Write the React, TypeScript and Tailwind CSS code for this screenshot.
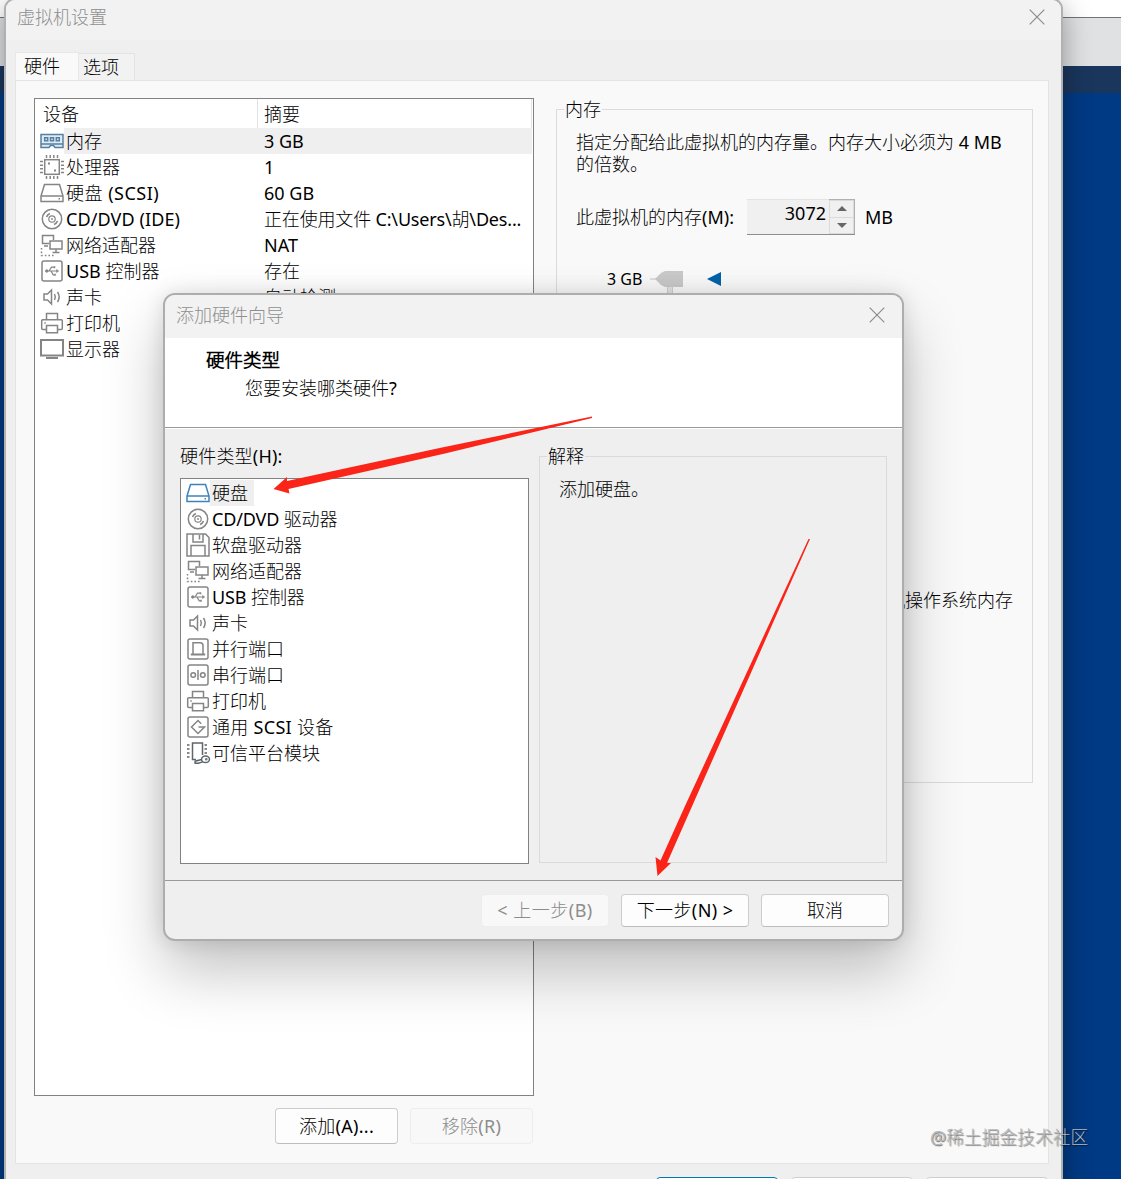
import { clsx } from 'clsx';
import type { ReactNode } from 'react';

type IconName =
  | 'memory'
  | 'cpu'
  | 'disk'
  | 'disc'
  | 'network'
  | 'usb'
  | 'sound'
  | 'printer'
  | 'display'
  | 'floppy'
  | 'parallel'
  | 'serial'
  | 'scsi'
  | 'tpm';

const devices: { icon: IconName; name: string; summary?: string; nameClass?: string; summaryClass?: string }[] = [
  { icon: 'memory', name: '内存', summary: '3 GB' },
  { icon: 'cpu', name: '处理器', summary: '1' },
  { icon: 'disk', name: '硬盘 (SCSI)', summary: '60 GB', nameClass: 'tracking-[0.5px]' },
  {
    icon: 'disc',
    name: 'CD/DVD (IDE)',
    summary: '正在使用文件 C:\\Users\\胡\\Des...',
    nameClass: 'tracking-[0.1px]',
    summaryClass: 'tracking-[-0.17px]',
  },
  { icon: 'network', name: '网络适配器', summary: 'NAT' },
  { icon: 'usb', name: 'USB 控制器', summary: '存在' },
  { icon: 'sound', name: '声卡', summary: '自动检测' },
  { icon: 'printer', name: '打印机' },
  { icon: 'display', name: '显示器' },
];

const hardwareTypes: { icon: IconName; name: string; nameClass?: string }[] = [
  { icon: 'disk', name: '硬盘' },
  { icon: 'disc', name: 'CD/DVD 驱动器', nameClass: 'tracking-[-0.15px]' },
  { icon: 'floppy', name: '软盘驱动器' },
  { icon: 'network', name: '网络适配器' },
  { icon: 'usb', name: 'USB 控制器', nameClass: 'tracking-[-0.1px]' },
  { icon: 'sound', name: '声卡' },
  { icon: 'parallel', name: '并行端口' },
  { icon: 'serial', name: '串行端口' },
  { icon: 'printer', name: '打印机' },
  { icon: 'scsi', name: '通用 SCSI 设备', nameClass: 'tracking-[0.3px]' },
  { icon: 'tpm', name: '可信平台模块' },
];

const frame = <rect x="2" y="2" width="20" height="20" rx="2" />;

const glyphs: Record<IconName, ReactNode> = {
  memory: (
    <>
      <path d="M1 5.5h22v13h-8l-1.5-2h-3l-1.5 2H1z" fill="#dfeaf3" />
      <path d="M1 15h22" />
      <path d="M4.7 8.7h3v3h-3zM10.5 8.7h3v3h-3zM16.3 8.7h3v3h-3z" />
    </>
  ),
  cpu: (
    <>
      <rect x="4.7" y="4.7" width="14.6" height="14.6" />
      <path d="M6.5 0v3M10.2 0v3M13.8 0v3M17.5 0v3M6.5 21v3M10.2 21v3M13.8 21v3M17.5 21v3M0 6.5h3M0 10.2h3M0 13.8h3M0 17.5h3M21 6.5h3M21 10.2h3M21 13.8h3M21 17.5h3" />
      <path d="M8 8.5h2M14 15.5h2" strokeWidth="2" />
    </>
  ),
  disk: (
    <>
      <path d="M4.5 3.5h15L23 15v5.5H1V15zM1 15h22" />
      <path d="M18.5 17.8h1.5" />
    </>
  ),
  disc: (
    <>
      <circle cx="12" cy="12" r="9.7" />
      <circle cx="12" cy="12" r="3.2" strokeWidth="1.2" />
      <circle cx="12" cy="12" r="0.6" strokeWidth="1" />
      <path d="M6.5 10c.6-1.6 1.8-2.8 3.4-3.4M14.1 17.4c1.6-.6 2.8-1.8 3.4-3.4" strokeWidth="1.6" />
    </>
  ),
  network: (
    <>
      <path d="M9 10.5H2.5v-8h11V7M4 13h4" />
      <rect x="10" y="8" width="12" height="8" fill="white" />
      <path d="M16 16v3M12.5 19.5h7" />
      <path d="M1.5 15v7.5h13" strokeDasharray="1.6 2" />
    </>
  ),
  usb: (
    <>
      {frame}
      <path d="M6 12h11M9 12l2.5-3.8H14M11 12l2.2 3.8h1.5" strokeWidth="1.2" />
      <circle cx="6.8" cy="12" r="1.2" fill="currentColor" strokeWidth="1" />
      <path d="M16.5 10.4l2.3 1.6-2.3 1.6z" fill="currentColor" strokeWidth=".5" />
      <path d="M13.7 8.2h1.6M14.2 15.8h1.6" strokeWidth="2" />
    </>
  ),
  sound: (
    <>
      <path d="M4 9h3.5l4-4v14l-4-4H4z" />
      <path d="M14.5 9c1 1.8 1 4.2 0 6M17.5 7c2 3 2 7 0 10" />
    </>
  ),
  printer: (
    <>
      <path d="M6.5 8.5v-6h11v6M6.5 18.5H2.7a1 1 0 0 1-1-1V9.7a1 1 0 0 1 1-1h18.6a1 1 0 0 1 1 1v7.8a1 1 0 0 1-1 1h-3.8" />
      <path d="M6.5 14.5h11v7.3h-11zM4.3 12h1.5" />
    </>
  ),
  display: (
    <>
      <path d="M1 3h22v15.5H1z" strokeWidth="2" />
      <path d="M6 21h12" strokeWidth="2" />
    </>
  ),
  floppy: (
    <>
      <path d="M1 1h18.5L23 4.5V23H1z" />
      <path d="M7 1v8h10V1M13.5 2v4.5M5 23V12.5h14V23" />
    </>
  ),
  parallel: (
    <>
      {frame}
      <path d="M7 17V5.8h7.2c1.8 0 2.8 1 2.8 2.8V17" />
      <path d="M4.8 17.5h14.4" strokeWidth="2" />
    </>
  ),
  serial: (
    <>
      {frame}
      <circle cx="7.2" cy="12" r="2.3" />
      <circle cx="16.8" cy="12" r="2.3" />
      <path d="M12 7v10" />
    </>
  ),
  scsi: (
    <>
      {frame}
      <path d="M15.2 8.8L12 5.5 5.5 12l6.5 6.5 6.5-6.5h-6" />
    </>
  ),
  tpm: (
    <>
      <path d="M10 18.5H6.5V2h10v12M3.5 4H1M3.5 8H1M3.5 12H1M3.5 16H1M21 4h-2.5M21 8h-2.5M21 12h-2.5" />
      <ellipse cx="19.5" cy="18.3" rx="4" ry="3.3" />
      <circle cx="20.3" cy="18.3" r=".5" />
      <path d="M15.6 18.5l-6.5 1.7v2h3.2l4.3-1.3" />
    </>
  ),
};

function DeviceIcon({ name, className }: { name: IconName; className?: string }) {
  return (
    <svg
      viewBox="0 0 24 24"
      className={clsx('size-6 shrink-0 overflow-visible', className)}
      fill="none"
      stroke="currentColor"
      strokeWidth="1.5"
      aria-hidden="true"
    >
      {glyphs[name]}
    </svg>
  );
}

function CloseButton() {
  return (
    <button type="button" aria-label="关闭" className="text-[#8c8c8c]">
      <svg viewBox="0 0 16 16" className="size-4" fill="none" stroke="currentColor" strokeWidth="1.2">
        <path d="M.7.7l14.6 14.6M15.3.7L.7 15.3" />
      </svg>
    </button>
  );
}

function Button({ children, disabled, className }: { children: ReactNode; disabled?: boolean; className?: string }) {
  return (
    <button
      type="button"
      disabled={disabled}
      className={clsx(
        'flex items-center justify-center rounded border',
        disabled ? 'border-[#ededed] bg-[#f8f8f8] text-[#8c8c8c]' : 'border-[#cdcdcd] border-b-[#bdbdbd] bg-[#fdfdfd]',
        className,
      )}
    >
      {children}
    </button>
  );
}

function DeviceList() {
  return (
    <div className="flex h-[998px] w-[500px] flex-col border border-[#828282] bg-white">
      <div className="flex h-[29px]">
        <div className="w-[223px] border-r border-[#e2e2e2] pl-2 leading-[30px]">设备</div>
        <div className="mr-px flex-1 border-r border-[#e2e2e2] pl-[6px] leading-[30px]">摘要</div>
      </div>
      {devices.map((device, i) => (
        <div key={device.name} className="flex h-[26px] items-center pl-[5px]">
          <DeviceIcon name={device.icon} className={i === 0 ? 'text-[#557fa3]' : 'text-[#858585]'} />
          <div className={clsx('mr-px flex h-full flex-1 items-center pl-[2px]', i === 0 && 'bg-[#efefef]')}>
            <span className={clsx('w-[198px]', device.nameClass)}>{device.name}</span>
            <span className={clsx('whitespace-nowrap', device.summaryClass)}>{device.summary}</span>
          </div>
        </div>
      ))}
    </div>
  );
}

function MemoryGroup() {
  return (
    <fieldset className="h-[685px] w-[477px] border border-[#dcdcdc] pl-[7px]">
      <legend className="px-px leading-[22px]">内存</legend>
      <div className="mt-[11px] ml-[12px] flex flex-col">
        <p className="w-[440px] leading-[22px]">指定分配给此虚拟机的内存量。内存大小必须为 4 MB 的倍数。</p>
        <div className="mt-6 flex h-9 items-center">
          <span className="w-[171px] whitespace-nowrap">此虚拟机的内存(M):</span>
          <div className="flex h-9 w-[108px] border-b border-[#8d8d8d] bg-[#f0f0f0]">
            <span className="flex-1 border-t border-[#e3e3e3] pr-[3px] text-right leading-[27px]">3072</span>
            <div className="flex w-[26px] flex-col border-t border-r border-[#b0b0b0] text-[#666]">
              <div className="flex flex-1 items-center justify-center border border-[#dadada]">
                <svg viewBox="0 0 10 5" className="h-[5px] w-[10px]">
                  <path d="M0 5l5-5 5 5z" fill="currentColor" />
                </svg>
              </div>
              <div className="flex flex-1 items-center justify-center border border-t-0 border-[#dadada]">
                <svg viewBox="0 0 10 5" className="h-[5px] w-[10px]">
                  <path d="M0 0l5 5 5-5z" fill="currentColor" />
                </svg>
              </div>
            </div>
          </div>
          <span className="ml-[10px]">MB</span>
        </div>
        <div className="mt-8 ml-[31px] flex h-6 items-center text-base">
          <span className="w-[43px]">3 GB</span>
          <svg viewBox="0 0 34 32" className="mt-2 h-8 w-[34px]">
            <path d="M0 12h6" stroke="#c4c4c4" />
            <path d="M17.5 16h5v16h-5z" fill="#e3e3e3" stroke="#cfcfcf" />
            <path d="M5 12l6-6 4-2h18v16H15l-4-2z" fill="#c9c9c9" />
          </svg>
          <svg viewBox="0 0 14 14" className="ml-[23px] size-[14px]">
            <path d="M0 7l14-7v14z" fill="#0063a8" />
          </svg>
        </div>
        <span className="mt-[298px] mr-[19px] self-end">客户机操作系统内存</span>
      </div>
    </fieldset>
  );
}

function SettingsWindow() {
  return (
    <div className="absolute top-[-2px] left-1 flex h-[1200px] w-[1059px] flex-col overflow-hidden rounded-[11px] border-2 border-[#b0b1b2] bg-[#efefef] shadow-[0_8px_28px_rgba(0,0,0,0.35)]">
      <div className="flex h-10 shrink-0 items-center justify-between bg-[#f2f2f2] pr-4 pb-[6px] pl-[11px] text-[#8f8f8f]">
        <span>虚拟机设置</span>
        <CloseButton />
      </div>
      <div className="mt-3 ml-[9px] flex h-7 shrink-0 items-end">
        <div className="h-7 w-16 border border-b-0 border-[#e8e8e8] bg-[#f9f9f9] pl-2 leading-[26px]">硬件</div>
        <div className="h-[27px] w-14 border border-b-0 border-l-0 border-[#e3e3e3] bg-[#f2f2f2] pl-[4px] leading-[27px]">
          选项
        </div>
      </div>
      <div className="ml-[9px] h-[1084px] w-[1034px] shrink-0 border border-[#e4e4e4] bg-[#f9f9f9] pt-[17px] pl-[18px]">
        <div className="flex gap-[22px]">
          <DeviceList />
          <MemoryGroup />
        </div>
        <div className="mt-3 flex w-[499px] justify-end gap-3">
          <Button className="h-9 w-[123px] tracking-[0.3px]">添加(A)...</Button>
          <Button disabled className="h-9 w-[123px] tracking-[0.3px]">
            移除(R)
          </Button>
        </div>
      </div>
      <div className="mt-[13px] mr-[13px] flex justify-end gap-[13px]">
        <div className="h-9 w-[122px] rounded border border-[#0078b8] bg-white" />
        <div className="h-9 w-[122px] rounded border border-[#cfcfcf] bg-white" />
        <div className="h-9 w-[122px] rounded border border-[#cfcfcf] bg-white" />
      </div>
    </div>
  );
}

function AddHardwareWizard() {
  return (
    <div className="absolute top-[293px] left-[163px] flex h-[648px] w-[741px] flex-col overflow-hidden rounded-[12px] border-2 border-[#adadad] bg-[#efefef] shadow-[0_30px_60px_rgba(0,0,0,0.24),0_0_20px_rgba(0,0,0,0.12)]">
      <div className="flex h-[43px] shrink-0 items-center justify-between bg-[#f2f2f2] pr-[17px] pb-[3px] pl-[11px] text-[#8f8f8f]">
        <span>添加硬件向导</span>
        <CloseButton />
      </div>
      <div className="h-[90px] shrink-0 border-b border-[#999] bg-white pt-[11px] pl-[41px]">
        <h2 className="text-[18.5px] leading-[22px] font-bold">硬件类型</h2>
        <p className="mt-[6px] pl-[39px] leading-[22px]">您要安装哪类硬件?</p>
      </div>
      <div className="flex h-[452px] shrink-0 border-t border-white pl-[15px]">
        <div className="w-[349px] pt-4">
          <div className="h-[33px] leading-[22px] tracking-[0.2px]">硬件类型(H):</div>
          <div className="h-[386px] border border-[#828282] bg-white pt-px pl-[5px]">
            {hardwareTypes.map((type, i) => (
              <div key={type.name} className="flex h-[26px] items-center">
                <DeviceIcon
                  name={type.icon}
                  className={i === 0 ? 'text-[#3d82bb]' : type.icon === 'tpm' ? 'text-[#5e666b]' : 'text-[#858585]'}
                />
                <span
                  className={clsx('h-full px-[2px] leading-[26px]', i === 0 && 'bg-[#efefef] pr-[6px]', type.nameClass)}
                >
                  {type.name}
                </span>
              </div>
            ))}
          </div>
        </div>
        <fieldset className="mt-4 ml-[10px] h-[418px] w-[348px] border border-[#dadada] pl-[7px]">
          <legend className="px-px leading-[22px]">解释</legend>
          <p className="mt-[11px] ml-3 leading-[22px]">添加硬盘。</p>
        </fieldset>
      </div>
      <div className="flex flex-1 items-start justify-end gap-3 border-t border-[#999] pt-[13px] pr-[13px]">
        <Button disabled className="h-[33px] w-[128px] pb-px tracking-[0.5px]">
          &lt; 上一步(B)
        </Button>
        <Button className="h-[33px] w-[128px] pb-px tracking-[0.4px]">下一步(N) &gt;</Button>
        <Button className="h-[33px] w-[128px] pb-px">取消</Button>
      </div>
    </div>
  );
}

export default function App() {
  return (
    <main className="relative h-[1179px] w-full overflow-hidden bg-[#003a84] font-['Noto_Sans','Noto_Sans_CJK_SC_Light','Noto_Sans_CJK_SC',sans-serif] text-[18px] leading-[22px] text-black">
      <div className="h-[18px] border-b border-[#6f7378] bg-white" />
      <div className="h-12 bg-[#dfe1e2]" />
      <div className="h-[27px] bg-[#1a365d]" />
      <SettingsWindow />
      <AddHardwareWizard />
      {/* pointers to the selected type and the next button */}
      <svg className="pointer-events-none absolute inset-0" width="1121" height="1179" fill="#fb2418" aria-hidden="true">
        <path d="M592 416.5L442 447.5 287 481v-4L273.5 489l16 4.5-1-4.5L445 453.5 592 418z" />
        <path d="M810 539L667 863h4L657.5 876l-2-19 5 3.5L685 806 808.500 539z" />
      </svg>
      <div className="absolute top-[1126px] left-[930px] text-[17.8px] whitespace-nowrap text-[#b5b8ba] [text-shadow:1px_1px_1px_rgba(0,0,0,0.55)]">
        @稀土掘金技术社区
      </div>
    </main>
  );
}
